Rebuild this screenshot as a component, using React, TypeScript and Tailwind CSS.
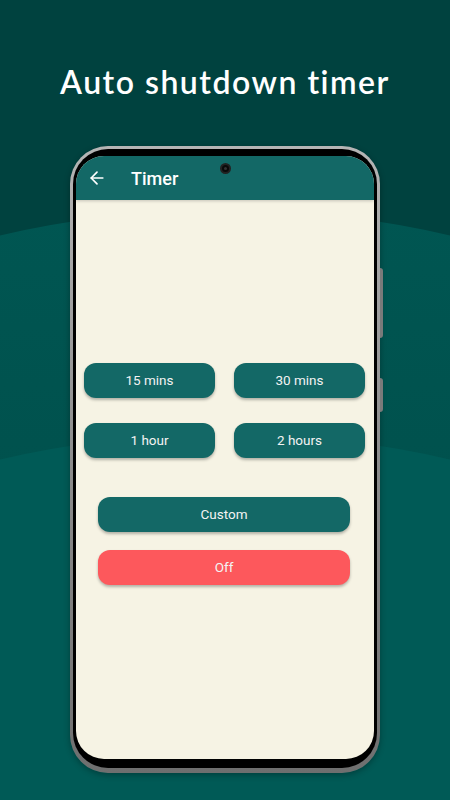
import { ArrowLeft } from 'lucide-react'

const presets = ['15 mins', '30 mins', '1 hour', '2 hours']

function TimerButton({ label, className = '' }: { label: string; className?: string }) {
  return (
    <button
      className={`h-[35px] rounded-[12px] text-[13.5px] text-[#f3f3f3] shadow-[0_2px_3px_rgba(0,0,0,0.28)] ${className}`}
    >
      {label}
    </button>
  )
}

export default function App() {
  return (
    <div className="relative w-[450px] h-[800px] overflow-hidden bg-[#00423f] flex flex-col items-center font-['Roboto',sans-serif]">
      {/* background arcs */}
      <div className="absolute left-[-375px] top-[210px] w-[1200px] h-[700px] rounded-[50%] bg-gradient-to-b from-[#005652] to-[#004a46]" />
      <div className="absolute left-[-375px] top-[434px] w-[1200px] h-[700px] rounded-[50%] bg-[#005a56]" />

      <h1 className="relative mt-[62px] text-[32px] leading-[40px] font-semibold text-white tracking-[1.5px] font-['Lato',sans-serif]">
        Auto shutdown timer
      </h1>

      {/* phone */}
      <div className="relative mt-[44px] w-[310px] h-[627px] rounded-[38px] bg-gradient-to-b from-[#b5b5b5] via-[#8c8c8c] to-[#6f6f6f] p-[3px] pb-[5px] shadow-[0_2px_6px_rgba(0,0,0,0.3)]">
        <div className="absolute right-[-3px] top-[122px] w-[3px] h-[70px] rounded-r-sm bg-[#7a7a7a]" />
        <div className="absolute right-[-3px] top-[232px] w-[3px] h-[34px] rounded-r-sm bg-[#7a7a7a]" />

        <div className="h-full rounded-[35px] bg-black px-[3px] pt-[7px] pb-[9px]">
          <div className="relative h-full rounded-[28px] overflow-hidden bg-[#f6f3e4] flex flex-col">
            <div className="absolute left-1/2 top-[7px] -ml-[5px] w-[11px] h-[11px] rounded-full bg-[#0a0a0a] border-2 border-[#222] flex items-center justify-center">
              <div className="w-[3px] h-[3px] rounded-full bg-[#333]" />
            </div>

            <div className="h-[44px] shrink-0 bg-[#136866] flex items-center shadow-[0_1px_3px_rgba(0,0,0,0.2)]">
              <ArrowLeft size={20} strokeWidth={2} className="ml-[11px] text-white" />
              <span className="ml-[24px] text-[18px] font-medium text-white">Timer</span>
            </div>

            <div className="grid grid-cols-2 gap-x-[19px] gap-y-[25px] pl-[8px] pr-[9px] mt-[163px]">
              {presets.map(p => (
                <TimerButton key={p} label={p} className="bg-[#136866]" />
              ))}
            </div>

            <div className="flex flex-col gap-[18px] pl-[22px] pr-[24px] mt-[39px]">
              <TimerButton label="Custom" className="bg-[#136866]" />
              <TimerButton label="Off" className="bg-[#fd585c]" />
            </div>
          </div>
        </div>
      </div>
    </div>
  )
}
